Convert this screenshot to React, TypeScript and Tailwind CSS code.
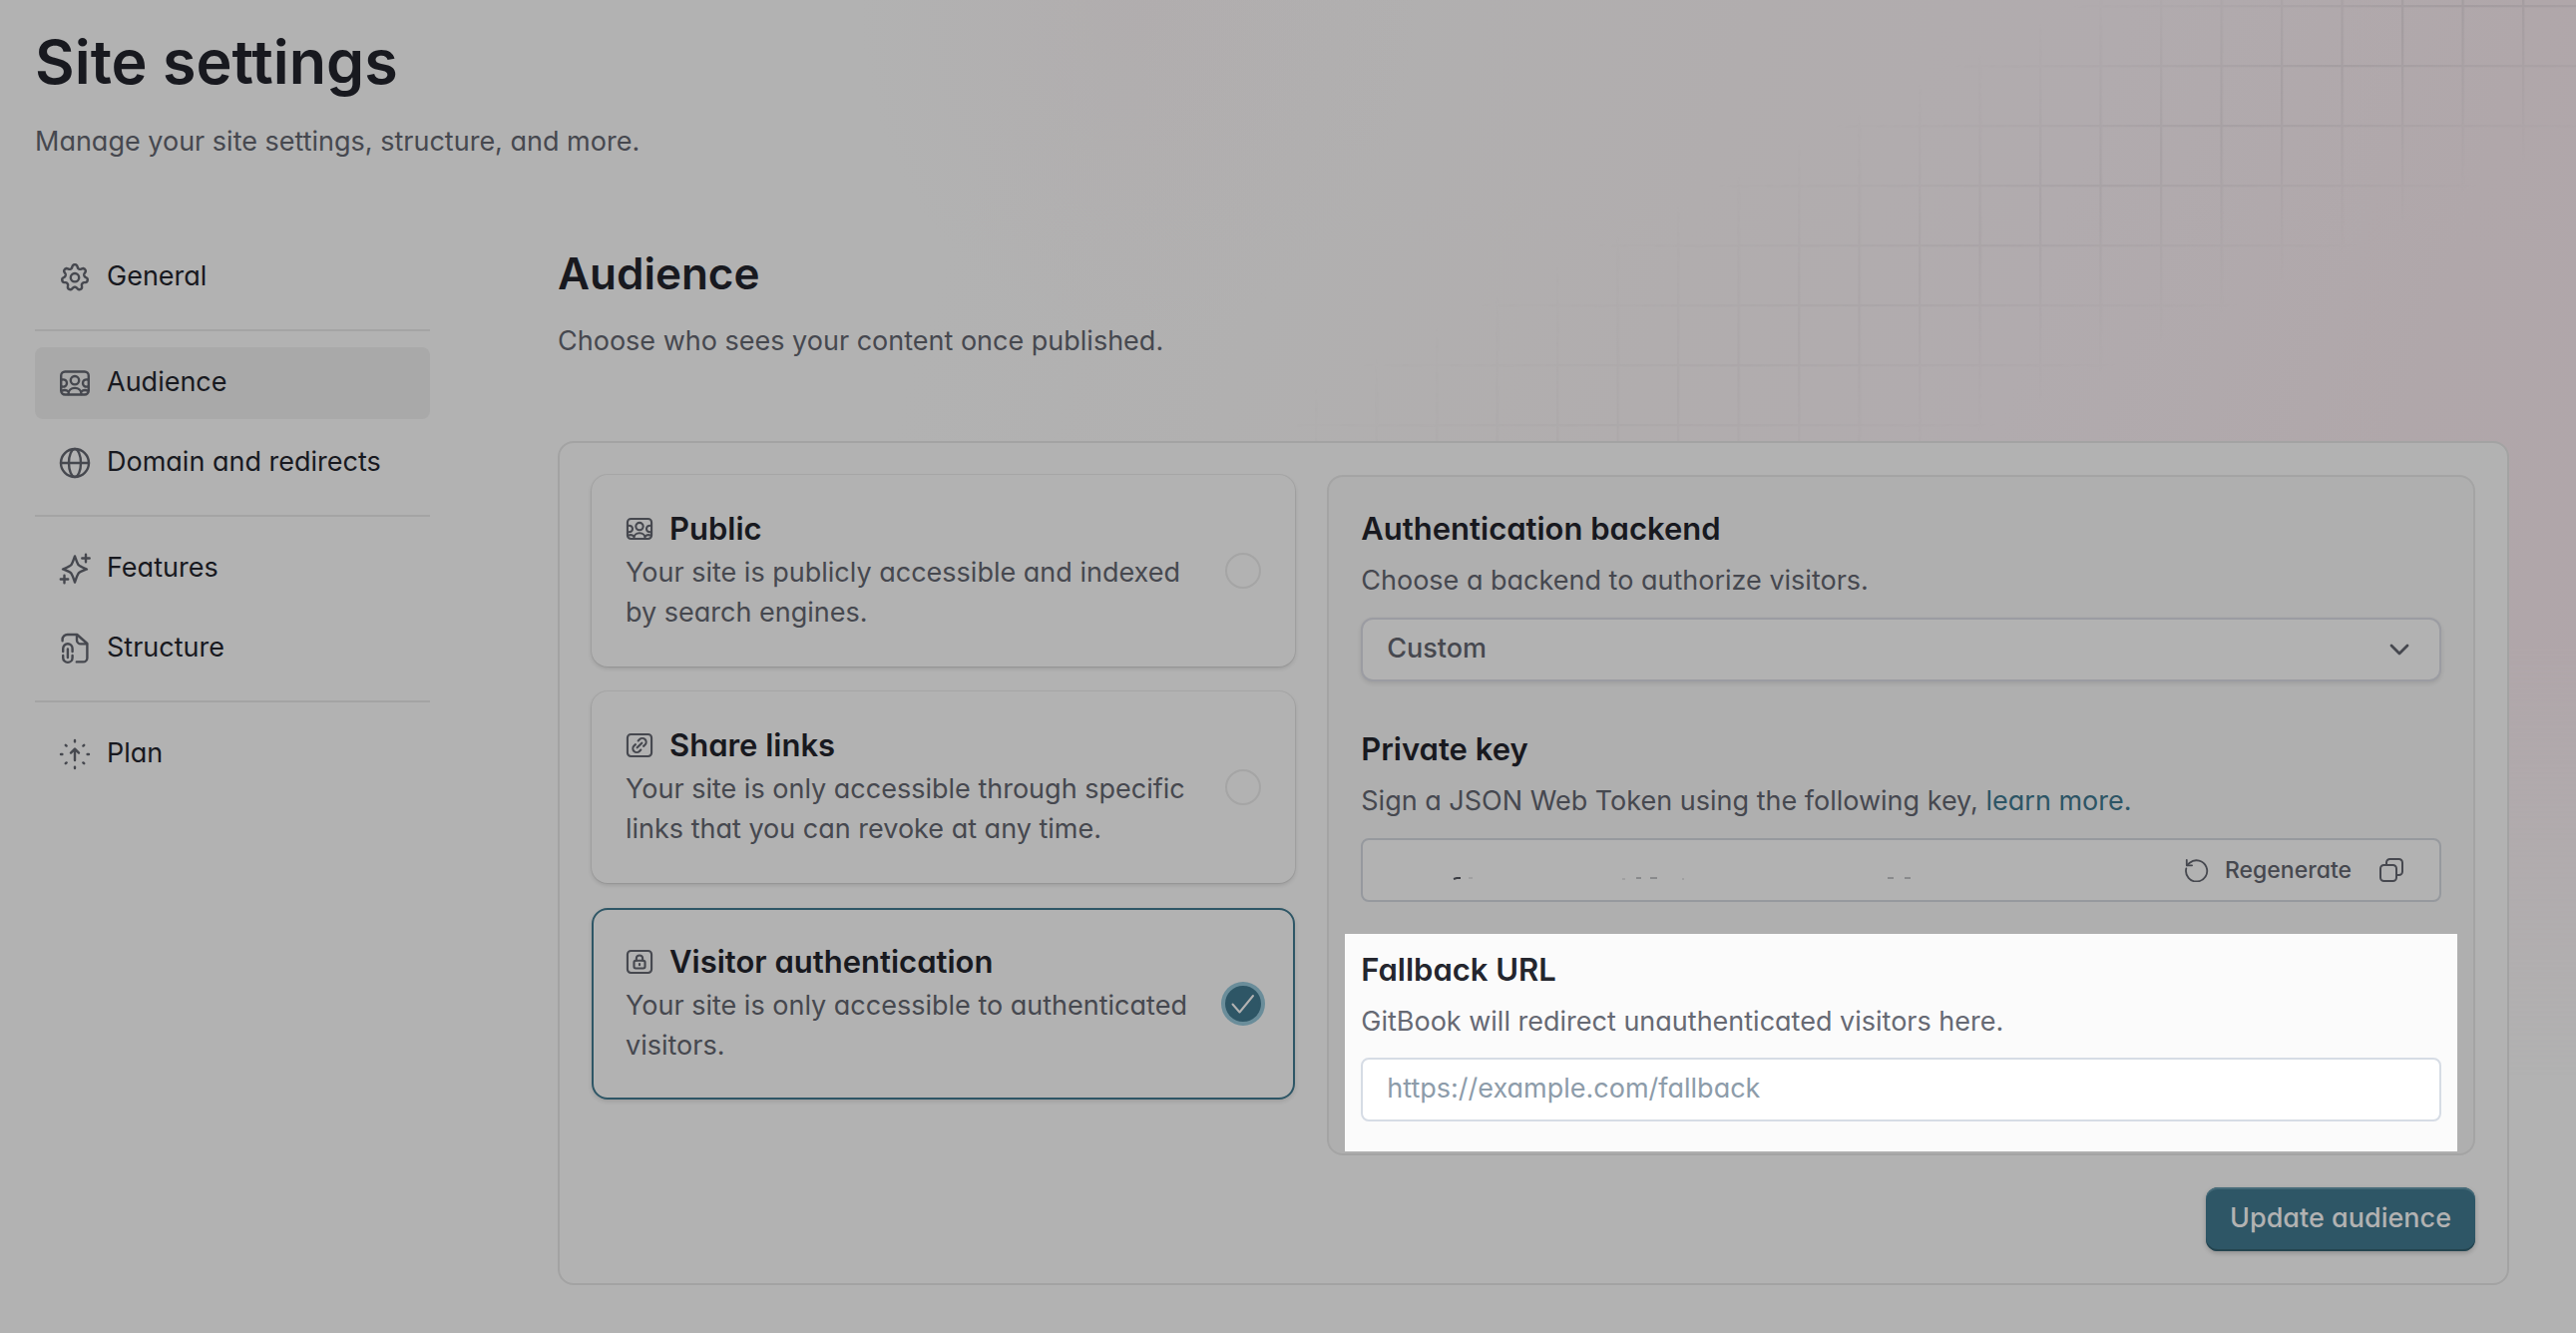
import { useState } from "react";
import type { ReactNode } from "react";

function Icon({ size, children }: { size: "sm" | "md"; children: ReactNode }) {
  return (
    <svg
      viewBox="0 0 32 32"
      className={size === "md" ? "size-8 shrink-0 text-[#46484f]" : "size-7 shrink-0 text-[#46484f]"}
      fill="none"
      stroke="currentColor"
      strokeWidth="2.4"
      strokeLinecap="round"
      strokeLinejoin="round"
      aria-hidden="true"
    >
      {children}
    </svg>
  );
}

/* Seven-toothed gear outline, traced as a closed polar curve. */
const gearOutline =
  Array.from({ length: 140 }, (_, i) => {
    const a = (i / 140) * Math.PI * 2;
    const r = 11.3 + 1.9 * Math.tanh(1.5 * Math.cos(7 * a));
    const x = (16 + r * Math.sin(a)).toFixed(2);
    const y = (16.2 - r * Math.cos(a)).toFixed(2);
    return `${i === 0 ? "M" : "L"}${x} ${y}`;
  }).join("") + "Z";

const gear = (
  <>
    <path d={gearOutline} />
    <circle cx="16" cy="16.2" r="4.2" />
  </>
);

const audience = (
  <>
    <rect x="2.2" y="4.5" width="27.6" height="23" rx="4" />
    <circle cx="16" cy="13.2" r="4.2" />
    <path d="M9.5 27c0-3.500 2.800-6.100 6.500-6.100s6.500 2.600 6.500 6.100" />
    <path d="M3 12.500c2.900-.6 5 .9 5 3.500s-2.100 4.100-5 3.500M29 12.500c-2.900-.6-5 .9-5 3.500s2.100 4.100 5 3.500" />
    <path d="M3 23.600c2.500-1 4.900-.7 6.600.9M29 23.600c-2.500-1-4.900-.7-6.600.9" />
  </>
);

const globe = (
  <>
    <circle cx="16" cy="16" r="14" />
    <ellipse cx="16" cy="16" rx="6" ry="14" />
    <path d="M2 16h28" />
  </>
);

const sparkles = (
  <>
    <path d="M16 3.500c1.200 3.300 2 6.200 3.500 8.600 1.400 1.800 4.700 2.800 8.500 4.400-3.800 1.500-7.100 2.500-8.500 4.300-1.500 2.300-2.300 5.300-3.500 8.700-1.200-3.400-2-6.400-3.500-8.700-1.400-1.800-4.700-2.800-8.500-4.300 3.800-1.600 7.100-2.600 8.500-4.400 1.500-2.400 2.300-5.300 3.500-8.600Z" />
    <path d="M27 1.800v7.400M23.300 5.500h7.400M5.500 22.800v7.400M1.800 26.500h7.400" />
  </>
);

const structure = (
  <>
    <path d="M3.600 8.200V7a5 5 0 0 1 5-5h9.600L28.400 11v14.400a4 4 0 0 1-4 4h-6.600" />
    <path d="M18 2.400v5a4 4 0 0 0 4 4h6" />
    <path d="M4.200 19v-3a4.700 4.700 0 0 1 9.400 0v3M4.200 23v2.200a4.700 4.700 0 0 0 9.400 0V23M8.900 16.500v8.500" />
  </>
);

const plan = (
  <>
    <path d="M16 22V11M12 14.600l4-4 4 4" />
    <path d="M16 2v1.400M16 28.600V30M2 16h1.400M28.600 16H30M6.800 6.800l.8.8M24.400 24.400l.8.8M25.200 6.800l-.8.8M7.600 24.400l-.8.8" />
  </>
);

const shareLink = (
  <>
    <rect x="2.200" y="3.500" width="27.600" height="25" rx="4" />
    <path d="M14.500 10.800l1.600-1.600a4.300 4.300 0 0 1 6.200 6.200l-1.700 1.600M17.500 21.200l-1.600 1.600a4.300 4.300 0 0 1-6.200-6.200l1.700-1.600M13.300 18.700l5.400-5.400" />
  </>
);

const lock = (
  <>
    <rect x="2.200" y="3.500" width="27.600" height="25" rx="4" />
    <rect x="9.700" y="14.500" width="12.600" height="9" rx="2" />
    <path d="M12.400 14.500v-2.400a3.600 3.600 0 0 1 7.200 0v2.400M16 18.400v1.200" />
  </>
);

function NavItem({ icon, label, active }: { icon: ReactNode; label: string; active?: boolean }) {
  return (
    <li>
      <a
        href="#"
        aria-current={active ? "page" : undefined}
        className={
          active
            ? "flex h-18 items-center gap-4 rounded-lg bg-[#a9a9a9] px-6 text-[#18191f]"
            : "flex h-18 items-center gap-4 rounded-lg px-6 text-[#18191f]"
        }
      >
        <Icon size="md">{icon}</Icon>
        <span className="pb-0.5">{label}</span>
      </a>
    </li>
  );
}

const navGroups = [
  [{ icon: gear, label: "General" }],
  [
    { icon: audience, label: "Audience", active: true },
    { icon: globe, label: "Domain and redirects" },
  ],
  [
    { icon: sparkles, label: "Features" },
    { icon: structure, label: "Structure" },
  ],
  [{ icon: plan, label: "Plan" }],
];

function Sidebar() {
  return (
    <nav aria-label="Site settings" className="w-[396px] shrink-0">
      {navGroups.map((group, i) => (
        <ul
          key={i}
          className={
            i === 0 ? "flex flex-col gap-2" : "mt-4 flex flex-col gap-2 border-t-2 border-[#a4a4a4] pt-4"
          }
        >
          {group.map((item) => (
            <NavItem key={item.label} {...item} />
          ))}
        </ul>
      ))}
    </nav>
  );
}

const options = [
  {
    id: "public",
    icon: audience,
    title: "Public",
    text: "Your site is publicly accessible and indexed by search engines.",
  },
  {
    id: "share",
    icon: shareLink,
    title: "Share links",
    text: "Your site is only accessible through specific links that you can revoke at any time.",
  },
  {
    id: "visitor",
    icon: lock,
    title: "Visitor authentication",
    text: "Your site is only accessible to authenticated visitors.",
  },
];

function AudienceOptions() {
  const [selected, setSelected] = useState("visitor");
  return (
    <fieldset aria-label="Who can see the site" className="flex flex-col gap-[25px]">
      {options.map((o) => {
        const checked = selected === o.id;
        return (
          <label
            key={o.id}
            className={
              checked
                ? "flex items-center gap-8 rounded-2xl border-2 border-[#2e5666] p-8 shadow-[0_2px_4px_rgba(0,0,0,0.12)]"
                : "flex items-center gap-8 rounded-2xl border-2 border-transparent p-8 shadow-[0_0_0_1px_rgba(0,0,0,0.05),0_2px_4px_rgba(0,0,0,0.14)]"
            }
          >
            <span className="flex min-w-0 flex-1 flex-col gap-1">
              <span className="flex items-center gap-4">
                <Icon size="sm">{o.icon}</Icon>
                <span className="text-[31px] leading-10 font-semibold text-[#18191f]">{o.title}</span>
              </span>
              <span className="leading-10 text-[#46484f]">{o.text}</span>
            </span>
            <span className="grid shrink-0 place-items-center">
              <input
                type="radio"
                name="audience"
                checked={checked}
                onChange={() => setSelected(o.id)}
                className="col-start-1 row-start-1 size-9 appearance-none rounded-full border-2 border-[#a5a5a5] checked:border-[#2e5666] checked:bg-[#2e5666] checked:ring-4 checked:ring-[#6a8d9a]"
              />
              {checked && (
                <svg
                  viewBox="0 0 24 24"
                  className="pointer-events-none col-start-1 row-start-1 size-6 text-[#b2b2b2]"
                  fill="none"
                  stroke="currentColor"
                  strokeWidth="2"
                  strokeLinecap="round"
                  strokeLinejoin="round"
                  aria-hidden="true"
                >
                  <path d="M1.500 12.500l7 8L22 4" />
                </svg>
              )}
            </span>
          </label>
        );
      })}
    </fieldset>
  );
}

/* What stays visible of the masked key: slivers of a few letters. */
function MaskedKey() {
  return (
    <svg viewBox="0 0 560 8" className="h-2 w-[560px] shrink" fill="none" stroke="#3c3e44" aria-hidden="true">
      <path d="M67 5l3-1h4" strokeWidth="2" />
      <path d="M82 4h4M236 5h3M296 5h2" strokeWidth="1" opacity="0.300" />
      <path d="M250 4h5M264 4h7M502 4h6M519 4h6" strokeWidth="1" opacity="0.700" />
    </svg>
  );
}

function FieldHeading({ id, title, children }: { id: string; title: string; children: ReactNode }) {
  return (
    <div className="flex flex-col gap-3 leading-10">
      <label htmlFor={id} className="text-[31px] leading-10 font-semibold">
        {title}
      </label>
      <p id={`${id}-hint`}>{children}</p>
    </div>
  );
}

function AuthPanel() {
  return (
    <div className="flex flex-col gap-12 rounded-2xl border-2 border-[#a4a4a4] bg-[#afafaf] p-8 text-[#46484f]">
      <div className="flex flex-col gap-[17px] [&_label]:text-[#18191f]">
        <FieldHeading id="backend" title="Authentication backend">
          Choose a backend to authorize visitors.
        </FieldHeading>
        <div className="grid items-center">
          <select
            id="backend"
            aria-describedby="backend-hint"
            className="col-start-1 row-start-1 h-16 w-full appearance-none rounded-xl border-2 border-[#9b9ca2] bg-[#b2b2b2] px-6 pb-0.5 font-medium shadow-[0_2px_4px_rgba(0,0,0,0.1)]"
          >
            <option>Custom</option>
          </select>
          <svg
            viewBox="0 0 32 32"
            className="pointer-events-none col-start-1 row-start-1 mr-[26px] size-8 justify-self-end"
            fill="none"
            stroke="currentColor"
            strokeWidth="2.800"
            strokeLinecap="round"
            strokeLinejoin="round"
            aria-hidden="true"
          >
            <path d="M8 12l8 8 8-8" />
          </svg>
        </div>
      </div>

      <div className="flex flex-col gap-[17px] [&_label]:text-[#18191f]">
        <FieldHeading id="private-key" title="Private key">
          Sign a JSON Web Token using the following key,{" "}
          <a href="#" className="text-[#2d5565]">
            learn more.
          </a>
        </FieldHeading>
        <div className="flex h-16 items-center justify-between rounded-lg border-2 border-[#96999e] bg-[#b2b2b2] pr-9 pl-6">
          <div className="pt-4">
            <MaskedKey />
          </div>
          <div className="flex items-center gap-7">
            <button id="private-key" type="button" className="flex items-center gap-4 text-[23px] font-medium">
              <svg
                viewBox="0 0 24 24"
                className="size-6"
                fill="none"
                stroke="currentColor"
                strokeWidth="1.800"
                strokeLinecap="round"
                strokeLinejoin="round"
                aria-hidden="true"
              >
                <path d="M1.300 10.500A10.600 10.600 0 1 0 4.800 4.800L2 7.200" />
                <path d="M1.800 2v5.300h5.300" />
              </svg>
              Regenerate
            </button>
            <button type="button" aria-label="Copy private key">
              <svg
                viewBox="0 0 24 24"
                className="size-6"
                fill="none"
                stroke="currentColor"
                strokeWidth="2"
                strokeLinejoin="round"
                aria-hidden="true"
              >
                <rect x="1" y="7" width="16" height="16" rx="3.500" />
                <path d="M7 7V4.500A3.500 3.500 0 0 1 10.500 1h9A3.500 3.500 0 0 1 23 4.500v9a3.500 3.500 0 0 1-3.500 3.500H17" />
              </svg>
            </button>
          </div>
        </div>
      </div>

      <div className="-mx-4 -mt-4 -mb-[30px] flex flex-col gap-4 bg-[#fbfbfb] px-4 pt-4 pb-[30px] text-[#666973] [&_label]:text-[#24262e]">
        <FieldHeading id="fallback" title="Fallback URL">
          GitBook will redirect unauthenticated visitors here.
        </FieldHeading>
        <input
          id="fallback"
          type="url"
          aria-describedby="fallback-hint"
          placeholder="https://example.com/fallback"
          className="h-16 w-full rounded-lg border-2 border-[#d6dce5] bg-white px-6 pb-1 placeholder:text-[#8d9caa]"
        />
      </div>
    </div>
  );
}

function Backdrop() {
  return (
    <div className="pointer-events-none absolute inset-0 overflow-hidden" aria-hidden="true">
      <div className="absolute top-0 right-0 h-[1080px] w-2/3 bg-[linear-gradient(107deg,#b2b2b2_8%,#b1b0b0_24%,#b1adae_44%,#b1abae_62%,#b0a7aa_82%,#b0a5a9_100%)] [mask-image:linear-gradient(to_bottom,black_60%,transparent)]" />
      <div className="absolute top-0 left-1/3 h-[340px] w-[560px] bg-[radial-gradient(ellipse_50%_100%_at_50%_0%,rgba(176,168,170,0.45),transparent)]" />
      <svg className="absolute top-0 right-0 h-[442px] w-[1282px]" viewBox="0 0 1282 442">
        <defs>
          <pattern id="grid" width="60.500" height="60" patternUnits="userSpaceOnUse" x="18" y="5">
            <path d="M0 1h60.500M1 0v60" stroke="#8f8a8e" strokeWidth="2.500" />
          </pattern>
          <linearGradient id="band" gradientUnits="userSpaceOnUse" x1="690" y1="50" x2="860" y2="390">
            <stop offset="0" stopColor="#fff" stopOpacity="0" />
            <stop offset="0.450" stopColor="#fff" />
            <stop offset="0.900" stopColor="#fff" stopOpacity="0" />
          </linearGradient>
          <linearGradient id="reach" gradientUnits="userSpaceOnUse" x1="1240" y1="0" x2="140" y2="442">
            <stop offset="0" stopColor="#fff" stopOpacity="0.400" />
            <stop offset="0.500" stopColor="#fff" stopOpacity="0.200" />
            <stop offset="1" stopColor="#fff" stopOpacity="0.080" />
          </linearGradient>
          <mask id="bandMask">
            <rect width="1282" height="442" fill="url(#band)" />
          </mask>
          <mask id="reachMask">
            <rect width="1282" height="442" fill="url(#reach)" />
          </mask>
        </defs>
        <g mask="url(#reachMask)">
          <rect width="1282" height="442" fill="url(#grid)" mask="url(#bandMask)" />
        </g>
      </svg>
    </div>
  );
}

export default function App() {
  return (
    <div className="relative min-h-screen bg-[#b2b2b2] pt-[26px] pr-[67px] pb-12 pl-[35px] font-[Inter,sans-serif] text-[27px] leading-10 text-[#18191f] [font-feature-settings:'cv11']">
      <Backdrop />
      <div className="relative">
        <header>
          <h1 className="text-[61px] leading-[72px] font-semibold">Site settings</h1>
          <p className="mt-6 text-[#46484f]">Manage your site settings, structure, and more.</p>
        </header>

        <div className="mt-20 flex gap-32">
          <Sidebar />
          <main className="min-w-0 flex-1 pt-1">
            <h2 className="text-[44px] leading-[56px] font-semibold">Audience</h2>
            <p className="mt-5 text-[#46484f]">Choose who sees your content once published.</p>
            <form
              onSubmit={(e) => e.preventDefault()}
              className="mt-20 flex flex-col gap-8 rounded-2xl border-2 border-[#a3a3a3] bg-[#b2b2b2] p-8"
            >
              <div className="grid grid-cols-[38fr_62fr] items-start gap-8">
                <AudienceOptions />
                <AuthPanel />
              </div>
              <button
                type="submit"
                className="h-16 self-end rounded-xl bg-[#2e5666] px-6 pb-0.5 font-medium text-[#b2b2b2] shadow-[inset_0_2px_0_#466b79,inset_0_-2px_0_#24444f,0_2px_5px_rgba(0,0,0,0.2)]"
              >
                Update audience
              </button>
            </form>
          </main>
        </div>
      </div>
    </div>
  );
}
